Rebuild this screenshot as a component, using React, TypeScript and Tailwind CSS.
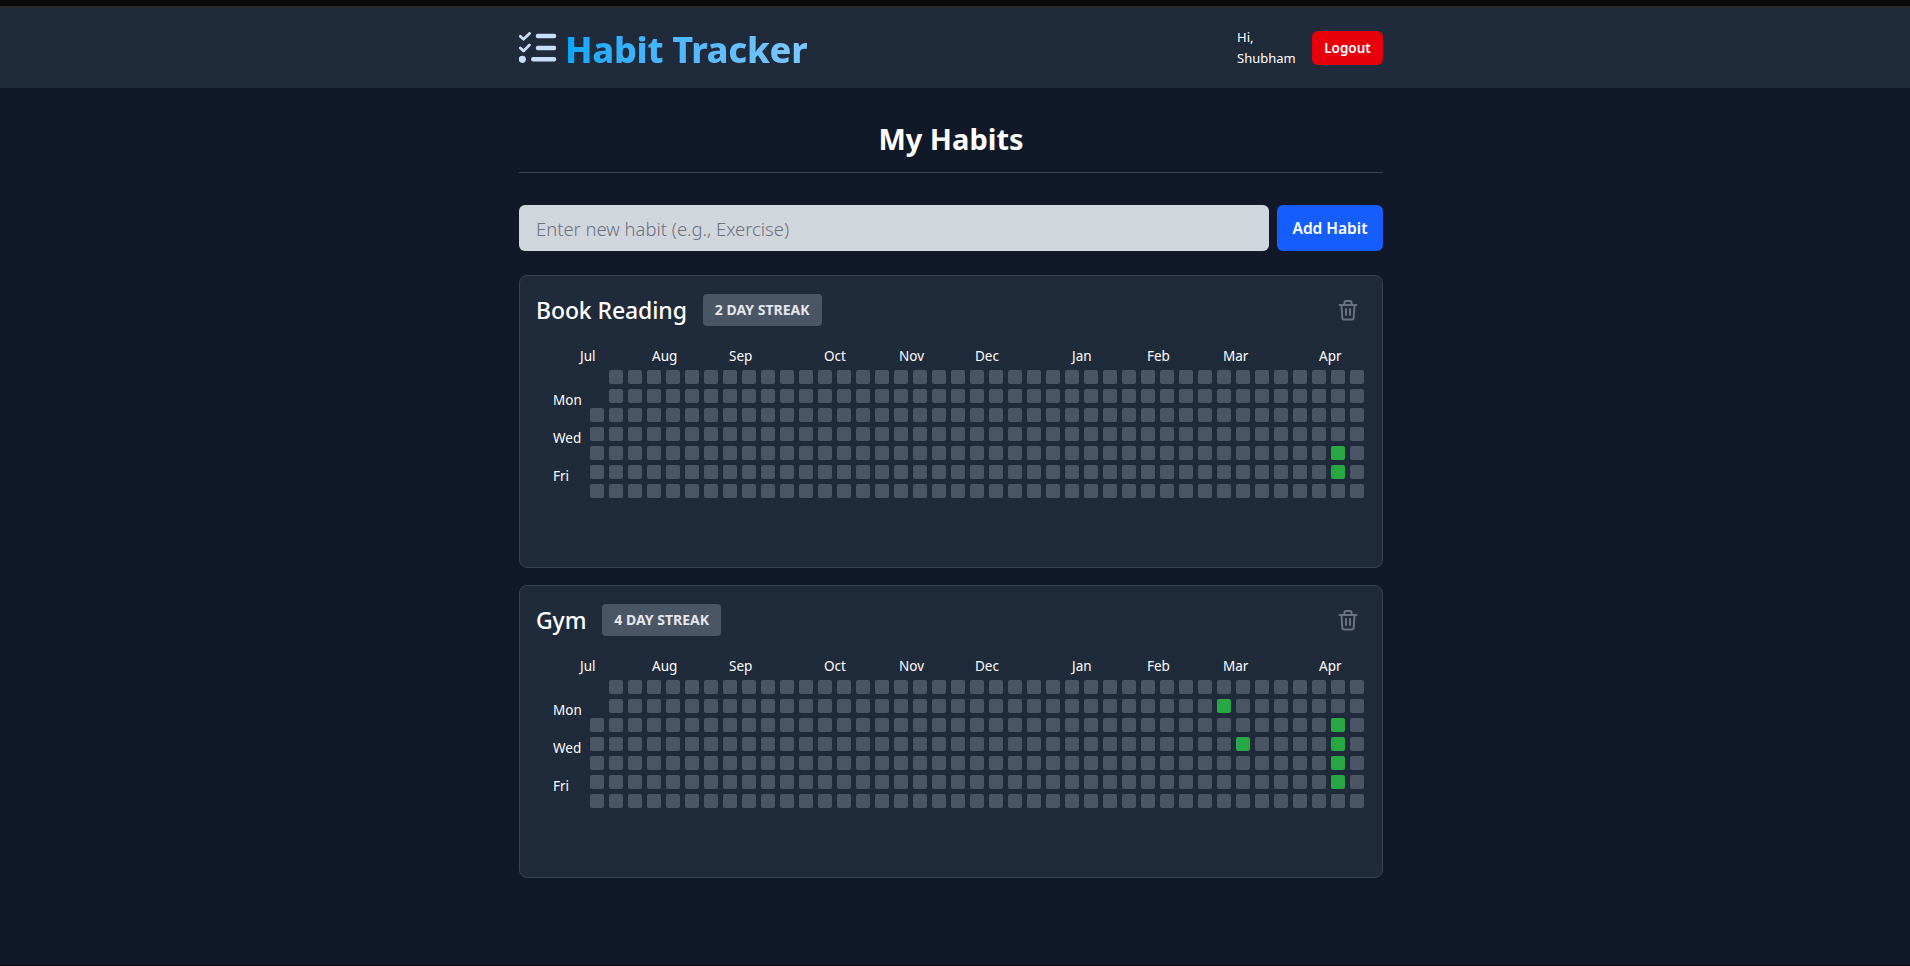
const WEEKS = 41

const MONTHS = [
  { name: 'Jul', w: 'w-[72px]' },
  { name: 'Aug', w: 'w-[77px]' },
  { name: 'Sep', w: 'w-[95px]' },
  { name: 'Oct', w: 'w-[75px]' },
  { name: 'Nov', w: 'w-[76px]' },
  { name: 'Dec', w: 'w-[97px]' },
  { name: 'Jan', w: 'w-[75px]' },
  { name: 'Feb', w: 'w-[76px]' },
  { name: 'Mar', w: 'w-[96px]' },
  { name: 'Apr', w: 'w-[40px]' },
]

const HABITS = [
  { name: 'Book Reading', streak: 2, done: ['39-4', '39-5'] },
  { name: 'Gym', streak: 4, done: ['33-1', '34-3', '39-2', '39-3', '39-4', '39-5'] },
]

function Logo() {
  return (
    <svg width="40" height="32" viewBox="0 0 40 32" fill="none" className="shrink-0">
      <g stroke="#c9deff" strokeLinecap="round" strokeLinejoin="round">
        <path d="M1.3 4.3l3.2 2.9l6-5.8" strokeWidth="2.8" />
        <path d="M1.3 16l3.2 2.9l6-5.8" strokeWidth="2.8" />
        <path d="M19 4H35M19 16H35M14.3 27.3H35" strokeWidth="4.6" />
      </g>
      <circle cx="3.3" cy="27.3" r="3.6" fill="#c9deff" />
    </svg>
  )
}

function TrashIcon() {
  return (
    <svg
      width="24"
      height="24"
      viewBox="0 0 24 24"
      fill="none"
      stroke="currentColor"
      strokeWidth="2"
      strokeLinecap="round"
      strokeLinejoin="round"
      className="mr-[6px] shrink-0 text-gray-500"
    >
      <path d="M3.5 7h17" />
      <path d="M8.5 7V4.2A1.2 1.2 0 0 1 9.7 3h4.6a1.2 1.2 0 0 1 1.2 1.2V7" />
      <path d="M5.5 7l.8 13a1.5 1.5 0 0 0 1.5 1.4h8.4a1.5 1.5 0 0 0 1.5-1.4l.8-13" />
      <path d="M10 11v6M14 11v6" />
    </svg>
  )
}

function Heatmap({ done }: { done: string[] }) {
  return (
    <div className="mt-[21px] flex flex-col">
      <div className="flex h-[19px] items-center pl-[44px] text-[13.5px] leading-none text-white">
        {MONTHS.map(m => (
          <span key={m.name} className={m.w}>{m.name}</span>
        ))}
      </div>
      <div className="mt-[4px] flex">
        <div className="flex w-[54px] shrink-0 flex-col pl-[17px] text-[13.5px] leading-[19px] text-white">
          <span className="mt-[21px]">Mon</span>
          <span className="mt-[19px]">Wed</span>
          <span className="mt-[19px]">Fri</span>
        </div>
        <div className="grid grid-flow-col grid-cols-[repeat(41,14px)] grid-rows-[repeat(7,14px)] gap-[5px]">
          {Array.from({ length: WEEKS * 7 }, (_, i) => {
            const col = Math.floor(i / 7)
            const row = i % 7
            if (col === 0 && row < 2) return <span key={i} />
            const on = done.includes(`${col}-${row}`)
            return (
              <span
                key={i}
                className={on ? 'rounded-[2px] bg-[#28a745]' : 'rounded-[2px] bg-gray-600'}
              />
            )
          })}
        </div>
      </div>
    </div>
  )
}

function HabitCard({ name, streak, done }: { name: string; streak: number; done: string[] }) {
  return (
    <div className="h-[293px] rounded-lg border border-gray-700 bg-[#1f2a3a] px-4 pt-[18px]">
      <div className="flex h-[32px] items-center justify-between">
        <div className="flex items-center gap-4">
          <h2 className="text-[23px] font-medium leading-8 tracking-[-0.1px] text-white">{name}</h2>
          <span className="rounded bg-gray-600 px-3 py-[6px] text-[14px] font-bold uppercase leading-5 text-gray-200">
            {streak} day streak
          </span>
        </div>
        <TrashIcon />
      </div>
      <Heatmap done={done} />
    </div>
  )
}

export default function App() {
  return (
    <div className="flex min-h-[966px] flex-col bg-[#111827] font-['Noto_Sans','Open_Sans',sans-serif]">
      <div className="h-[8px] border-b-2 border-[#2a2a2a] bg-[#0a0a0a]" />
      <header className="flex h-[80px] justify-center bg-[#1f2a3a] pr-[8px]">
        <div className="flex w-[864px] items-center justify-between">
          <div className="flex items-center gap-[6px]">
            <Logo />
            <span className="mt-[3px] bg-gradient-to-r from-[#00a8ff] to-[#7cc8ff] bg-clip-text text-[36px] font-extrabold leading-[44px] tracking-[-0.3px] text-transparent">
              Habit Tracker
            </span>
          </div>
          <div className="flex items-center gap-[15px]">
            <span className="w-[60px] text-[13px] leading-[21px] text-white">Hi, Shubham</span>
            <button className="h-[34px] w-[71px] rounded-md bg-red-600 text-[13.5px] font-semibold text-white">
              Logout
            </button>
          </div>
        </div>
      </header>
      <main className="w-full pr-[8px]">
        <div className="mx-auto w-[864px]">
          <h1 className="mt-[33px] border-b border-gray-700 pb-[15px] text-center text-[29px] font-bold leading-[36px] text-white">
            My Habits
          </h1>
          <div className="mt-8 flex gap-2">
            <input
              placeholder="Enter new habit (e.g., Exercise)"
              className="h-[46px] flex-1 rounded-md bg-gray-300 px-[17px] text-[18.4px] font-light text-gray-700 outline-none placeholder:text-gray-500"
            />
            <button className="h-[46px] w-[106px] rounded-md bg-blue-600 pt-[1px] text-[15.5px] font-semibold text-white">
              Add Habit
            </button>
          </div>
          <div className="mt-6 flex flex-col gap-[17px]">
            {HABITS.map(h => (
              <HabitCard key={h.name} name={h.name} streak={h.streak} done={h.done} />
            ))}
          </div>
        </div>
      </main>
      <div className="mt-auto h-px bg-[#0a0a0a]" />
    </div>
  )
}
